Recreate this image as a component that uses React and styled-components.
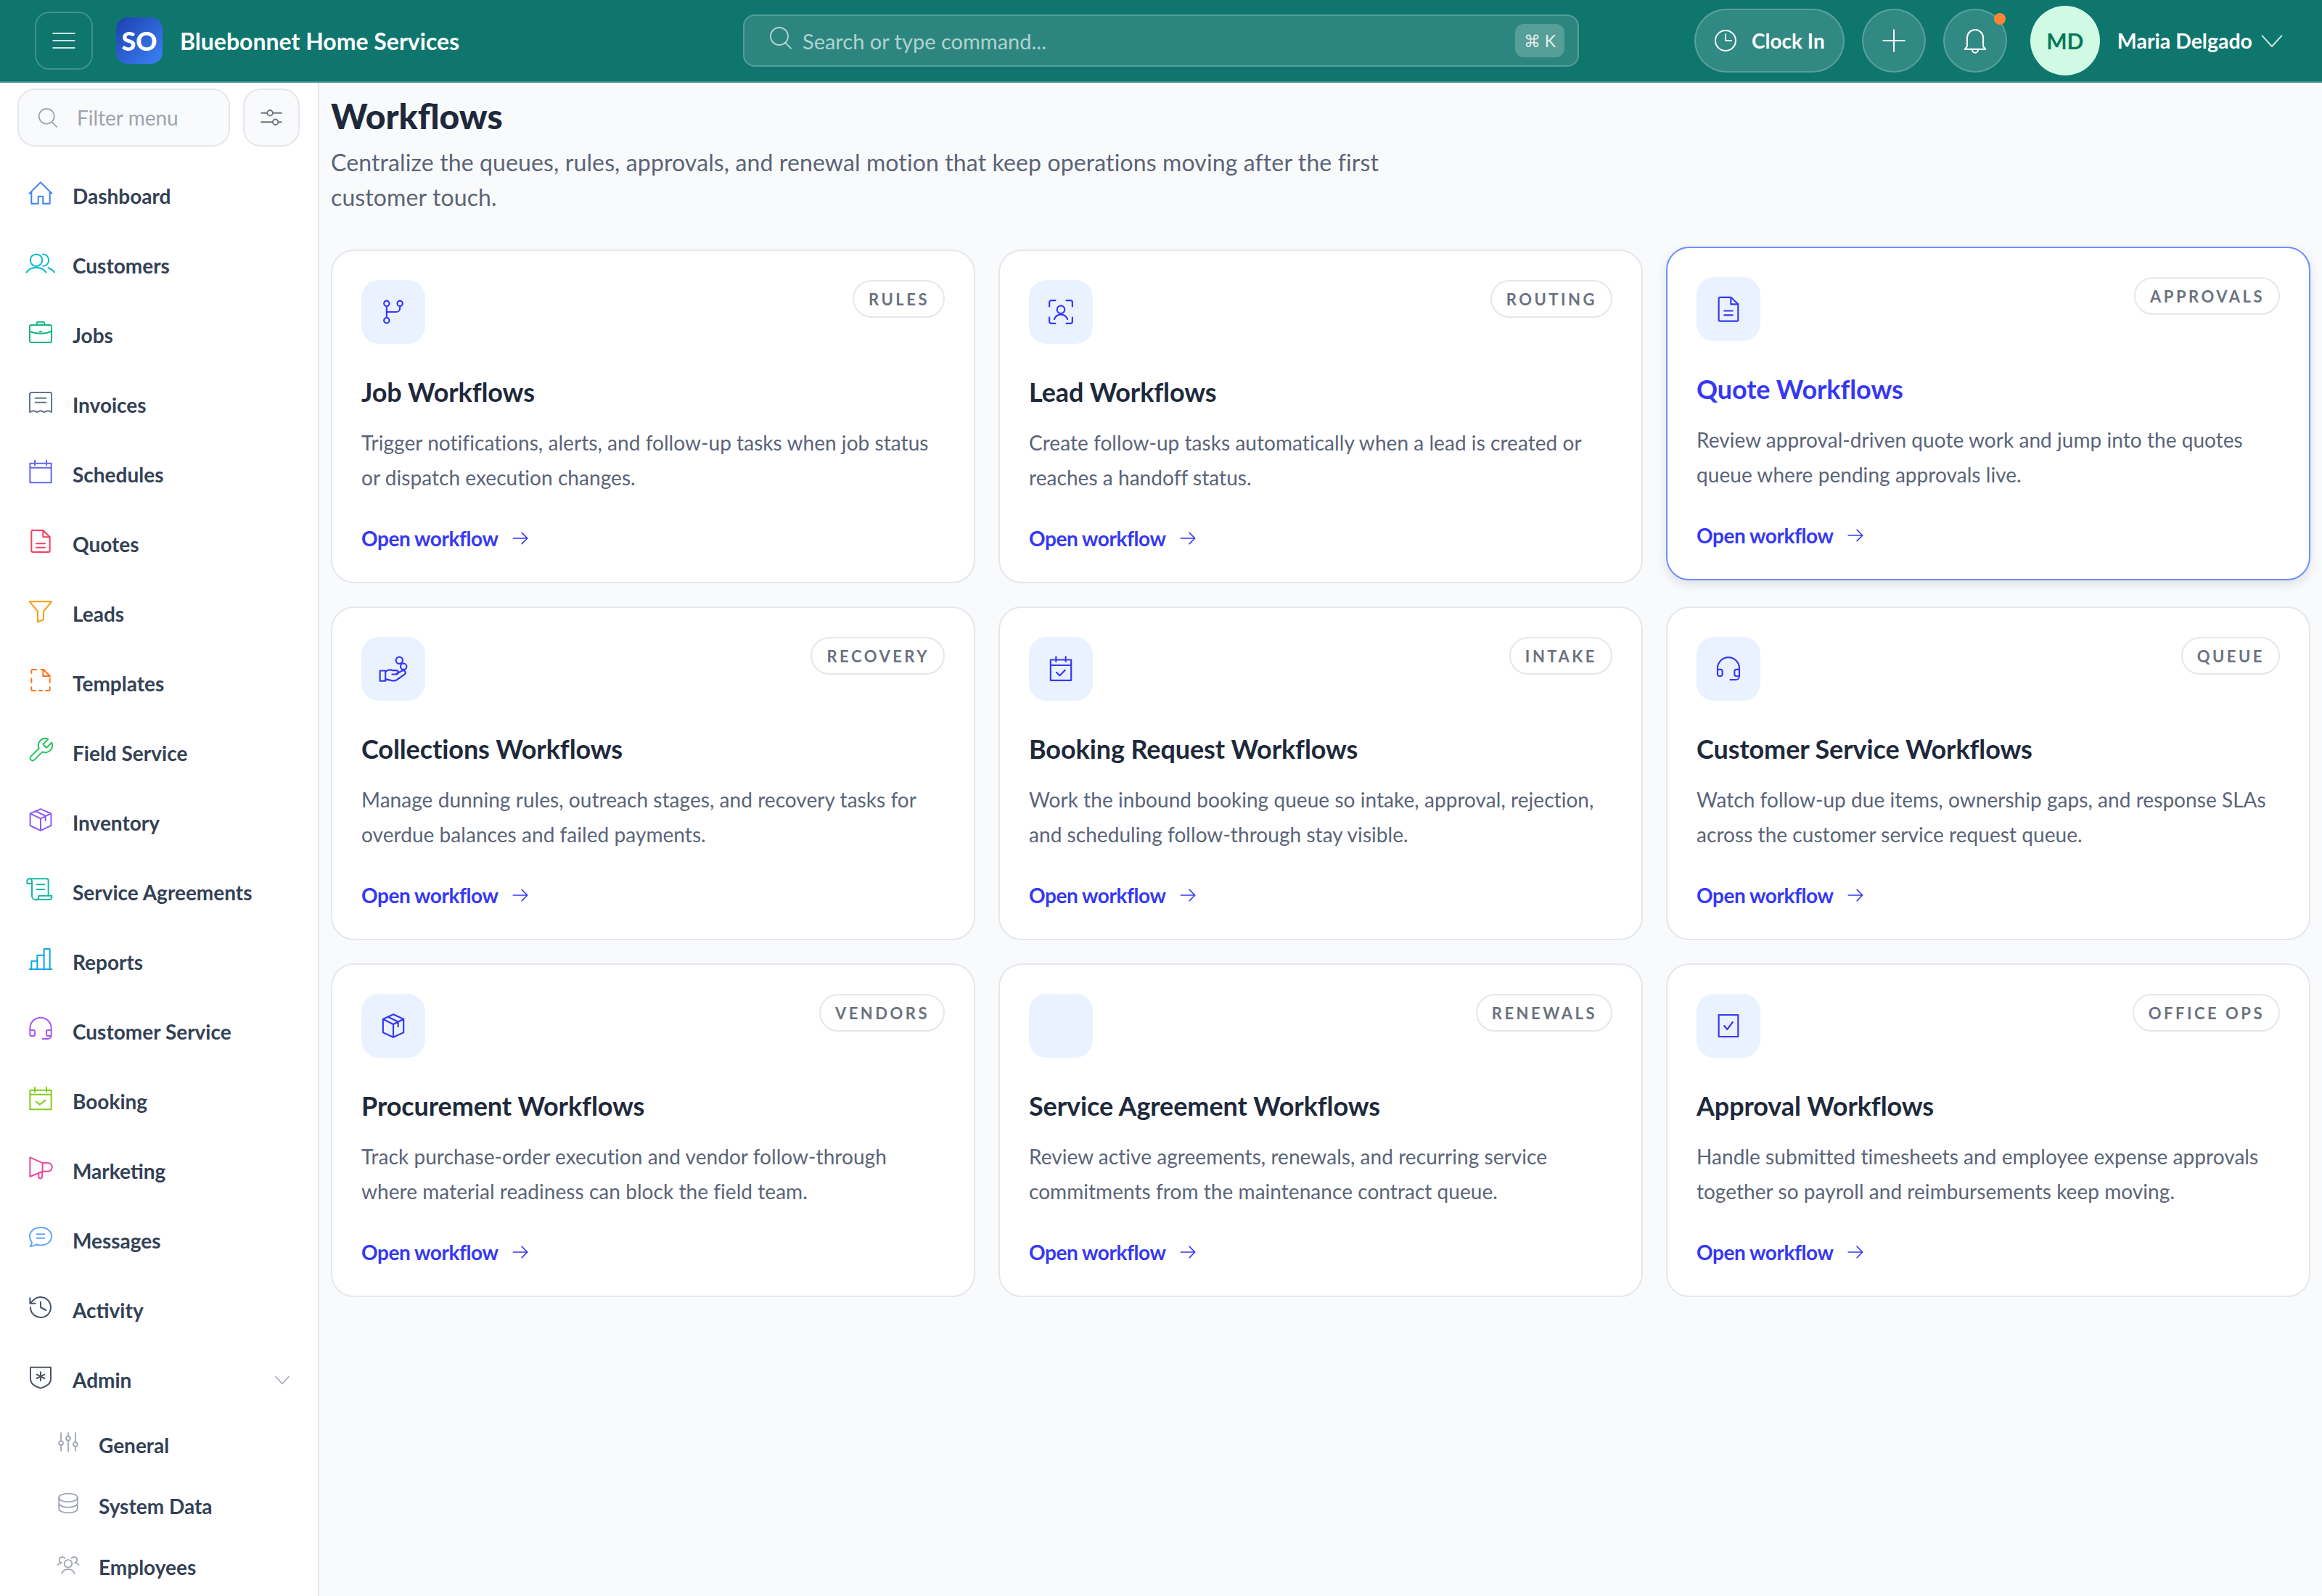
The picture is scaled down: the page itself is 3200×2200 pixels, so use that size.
import React from "react";
import styled, { createGlobalStyle } from "styled-components";

const GlobalStyle = createGlobalStyle`
  html, body { margin: 0; padding: 0; }
  body { font-family: "Lato", "Noto Sans", sans-serif; background: #f9fafb; }
  * { box-sizing: border-box; }
`;

const Shell = styled.div`
  width: 3200px;
  height: 2200px;
  display: flex;
  flex-direction: column;
  overflow: hidden;
`;

const Header = styled.header`
  height: 114px;
  flex: none;
  display: grid;
  grid-template-columns: 1fr 1152px 1fr;
  align-items: center;
  padding: 0 48px;
  background: #0f766e;
  border-bottom: 2px solid #3f918a;
`;

const HeaderLeft = styled.div`
  display: flex;
  align-items: center;
`;

const MenuButton = styled.div`
  width: 80px;
  height: 80px;
  display: flex;
  align-items: center;
  justify-content: center;
  border: 2px solid rgba(255, 255, 255, 0.2);
  border-radius: 20px;
  color: rgba(255, 255, 255, 0.8);
`;

const LogoMark = styled.div`
  width: 64px;
  height: 64px;
  margin-left: 32px;
  border-radius: 16px;
  background: linear-gradient(135deg, #1e40af, #3b82f6);
  color: #fff;
  font-size: 36px;
  font-weight: 900;
  display: flex;
  align-items: center;
  justify-content: center;
`;

const BrandName = styled.div`
  margin-left: 24px;
  color: #fff;
  font-size: 32px;
  font-weight: 700;
  white-space: nowrap;
`;

const SearchBar = styled.div`
  height: 72px;
  display: flex;
  align-items: center;
  padding: 0 18px 0 34px;
  border: 2px solid rgba(255, 255, 255, 0.2);
  border-radius: 16px;
  background: rgba(255, 255, 255, 0.12);
  color: rgba(255, 255, 255, 0.65);
`;

const SearchGlyph = styled.span`
  display: flex;
  margin-bottom: 8px;
`;

const SearchText = styled.span`
  margin-left: 14px;
  font-size: 29px;
  flex: 1;
`;

const Shortcut = styled.kbd`
  width: 68px;
  height: 46px;
  display: flex;
  align-items: center;
  justify-content: center;
  border-radius: 12px;
  background: rgba(255, 255, 255, 0.2);
  color: rgba(255, 255, 255, 0.85);
  font-family: "Lato", "DejaVu Sans", sans-serif;
  font-size: 23px;
`;

const HeaderRight = styled.div`
  display: flex;
  align-items: center;
  justify-content: flex-end;
  gap: 24px;
`;

const ClockButton = styled.div`
  height: 88px;
  width: 207px;
  display: flex;
  align-items: center;
  justify-content: center;
  gap: 20px;
  border: 2px solid rgba(255, 255, 255, 0.2);
  border-radius: 44px;
  background: rgba(255, 255, 255, 0.14);
  color: #fff;
  font-size: 28px;
  font-weight: 700;
`;

const RoundButton = styled.div`
  position: relative;
  width: 88px;
  height: 88px;
  display: flex;
  align-items: center;
  justify-content: center;
  border: 2px solid rgba(255, 255, 255, 0.2);
  border-radius: 50%;
  background: rgba(255, 255, 255, 0.14);
  color: #fff;
`;

const NotifyDot = styled.span`
  position: absolute;
  top: 4px;
  right: 0;
  width: 16px;
  height: 16px;
  border-radius: 50%;
  background: #fb8534;
`;

const Avatar = styled.div`
  width: 96px;
  height: 96px;
  margin-left: 8px;
  border-radius: 50%;
  background: #d1fae5;
  color: #047857;
  font-size: 30px;
  font-weight: 700;
  display: flex;
  align-items: center;
  justify-content: center;
`;

const UserName = styled.div`
  color: #fff;
  font-size: 28.5px;
  font-weight: 700;
  white-space: nowrap;
`;

const UserChevron = styled.div`
  margin: 0 5px 0 -13px;
  color: rgba(255, 255, 255, 0.8);
  display: flex;
`;

const Body = styled.div`
  flex: 1;
  min-height: 0;
  display: flex;
`;

const Sidebar = styled.aside`
  width: 440px;
  flex: none;
  padding-top: 8px;
  background: #fff;
  border-right: 2px solid #e5e7eb;
  overflow: hidden;
`;

const FilterRow = styled.div`
  display: flex;
  gap: 18px;
  padding: 0 24px;
  height: 80px;
`;

const FilterInput = styled.div`
  flex: none;
  width: 293px;
  display: flex;
  align-items: center;
  gap: 26px;
  padding-left: 26px;
  border: 2px solid #e5e7eb;
  border-radius: 24px;
  background: #f9fafb;
  color: #9ca3af;
  font-size: 28px;
`;

const FilterButton = styled.div`
  width: 78px;
  display: flex;
  align-items: center;
  justify-content: center;
  border: 2px solid #e5e7eb;
  border-radius: 24px;
  background: #f9fafb;
  color: #6b7280;
`;

const NavList = styled.nav`
  margin-top: 20px;
  display: flex;
  flex-direction: column;
`;

const NavRow = styled.div`
  height: ${(p) => (p.$sub ? 84 : 96)}px;
  flex: none;
  display: flex;
  align-items: center;
  gap: 28px;
  padding-left: ${(p) => (p.$sub ? 80 : 40)}px;
  padding-right: 40px;
  color: #334155;
  font-size: 28px;
  font-weight: 700;
`;

const NavIcon = styled.span`
  width: ${(p) => (p.$sub ? 28 : 32)}px;
  height: ${(p) => (p.$sub ? 28 : 32)}px;
  flex: none;
  margin-bottom: 8px;
  color: ${(p) => p.$color};
  display: flex;
`;

const NavLabel = styled.span`
  flex: 1;
  white-space: nowrap;
`;

const NavCaret = styled.span`
  color: #9ca3af;
  display: flex;
  margin-right: -2px;
`;

const Main = styled.main`
  flex: 1;
  min-width: 0;
  padding: 0 16px;
`;

const PageTitle = styled.h1`
  margin: 16px 0 0;
  color: #1e293b;
  font-size: 48px;
  line-height: 60px;
  font-weight: 900;
`;

const PageLead = styled.p`
  margin: 10px 0 0;
  max-width: 1500px;
  color: #5b6478;
  font-size: 32px;
  line-height: 48px;
  letter-spacing: 0.12px;
`;

const CardGrid = styled.div`
  margin-top: 48px;
  display: grid;
  grid-template-columns: repeat(3, 1fr);
  grid-auto-rows: 460px;
  gap: 32px;
`;

const Card = styled.article`
  display: flex;
  flex-direction: column;
  padding: 40px;
  background: #fff;
  border: 2px solid ${(p) => (p.$active ? "#6f8fff" : "#e5e7eb")};
  border-radius: 32px;
  box-shadow: ${(p) => (p.$active ? "0 6px 14px rgba(60, 70, 120, 0.14)" : "none")};
  transform: ${(p) => (p.$active ? "translateY(-4px)" : "none")};
`;

const CardTop = styled.div`
  display: flex;
  align-items: flex-start;
  justify-content: space-between;
`;

const IconTile = styled.div`
  width: 88px;
  height: 88px;
  display: flex;
  align-items: center;
  justify-content: center;
  border-radius: 24px;
  background: #ebf2ff;
  color: #3538f5;
`;

const Tag = styled.span`
  height: 52px;
  display: flex;
  align-items: center;
  padding: 0 19px 0 20px;
  border: 2px solid #e5e7eb;
  border-radius: 26px;
  color: #6b7280;
  font-size: 22px;
  font-weight: 700;
  letter-spacing: 3.5px;
`;

const CardTitle = styled.h2`
  margin: 42px 0 0;
  color: ${(p) => (p.$active ? "#3538f5" : "#1e293b")};
  font-size: 36px;
  line-height: 48px;
  font-weight: 700;
  letter-spacing: -0.1px;
`;

const CardText = styled.p`
  margin: 22px 0 0;
  color: #5b6478;
  font-size: 28px;
  line-height: 48px;
  letter-spacing: 0.05px;
`;

const CardLink = styled.a`
  margin-top: auto;
  height: 40px;
  display: flex;
  align-items: center;
  gap: 18px;
  color: #3538f5;
  font-size: 28px;
  font-weight: 700;
  letter-spacing: -0.45px;
`;

function Svg({ size = 32, sw = 1.5, children }) {
  return (
    <svg
      width={size}
      height={size}
      viewBox="0 0 24 24"
      fill="none"
      stroke="currentColor"
      strokeWidth={sw}
      strokeLinecap="round"
      strokeLinejoin="round"
      style={{ overflow: "visible", flex: "none" }}
    >
      {children}
    </svg>
  );
}

const P = ({ d }) => <path d={d} />;

const icons = {
  menu: <P d="M1 4.5h22M1 12h22M1 19.5h22" />,
  search: (
    <>
      <circle cx="10.5" cy="10.5" r="9" />
      <path d="M17 17.5l5.5 5.5" />
    </>
  ),
  sliders: (
    <>
      <path d="M1 7h6M14 7h9M1 17h12M20 17h3" />
      <circle cx="10.5" cy="7" r="3" />
      <circle cx="16.5" cy="17" r="3" />
    </>
  ),
  clock: (
    <>
      <circle cx="12" cy="12" r="10.5" />
      <path d="M12 5.5V12h6" />
    </>
  ),
  plus: <P d="M12 1v22M1 12h22" />,
  bell: <P d="M5 17V9.5a7 7 0 0 1 14 0V17l2 2.5H3L5 17zM9.5 20a2.5 2.5 0 0 0 5 0" />,
  chevron: <P d="M2 7l10 11L22 7" />,
  arrow: <P d="M3 12h18M14 5l7 7-7 7" />,
  home: <P d="M.5 12.5L12 1l11.500 11.500M2.500 10.500V23h7v-7.500h5V23h7V10.500" />,
  users: (
    <>
      <circle cx="7.5" cy="9.5" r="6.2" />
      <path d="M-2.5 22c2.5-3.500 5.500-5 10-5s7.500 1.500 10 5M14.500 3.400c3.200 0 5.800 2.700 5.800 6.100s-2.600 6.100-5.800 6.100M20 17.400c2.500.9 4.500 2.400 6.200 4.600" />
    </>
  ),
  briefcase: (
    <>
      <rect x="0.7" y="4.5" width="22.6" height="18" rx="1.7" />
      <path d="M8 4.5V3a1.6 1.6 0 0 1 1.6-1.6h4.8A1.6 1.6 0 0 1 16 3v1.500M.7 11c3.500 1.600 7.500 2.400 11.300 2.400s7.800-.8 11.300-2.400M11 11.200h2" />
    </>
  ),
  receipt: <P d="M.7 22.500V4a1.700 1.700 0 0 1 1.700-1.700h19.200A1.700 1.700 0 0 1 23.300 4v18.500l-3.800-1.400-3.700 1.400-3.800-1.400-3.800 1.400-3.700-1.400zM6.500 8h11M6.500 12.500h11" />,
  calendar: <P d="M1 3.500h22v20H1zM6 .5v5M18 .5v5M1 8h22" />,
  calendarCheck: <P d="M1 3.500h22v20H1zM6 .5v5M18 .5v5M1 8h22M7.500 15.500l3.500 3 6-4.500" />,
  doc: <P d="M2.500 2.200a1.500 1.500 0 0 1 1.500-1.500h10.500l7 7v14a1.500 1.500 0 0 1-1.500 1.500H4a1.500 1.500 0 0 1-1.500-1.500zM14.500.7v7h7M7.500 14.500h9M7.500 18.500h9" />,
  funnel: <P d="M.7 2.500h22.600L15 12.500v8.500l-6 2.500V12.500z" />,
  docDashed: <P d="M7.500.8H3.500a1 1 0 0 0-1 1v2.500M2.500 10v4M2.500 19v2.500a1 1 0 0 0 1 1h3M10.500 22.500h3M17.500 22.500h3a1 1 0 0 0 1-1V19M21.500 14v-4M12.500.8h2.500l6.500 6.500v.5M14.500 1v6.500h7" />,
  wrench: (
    <g transform="translate(-2.4 -2.4) scale(1.2)" strokeWidth="1.25">
      <path d="M14.700 6.300a1 1 0 0 0 0 1.400l1.600 1.600a1 1 0 0 0 1.400 0l3.770-3.770a6 6 0 0 1-7.940 7.940l-6.910 6.910a2.120 2.120 0 0 1-3-3l6.910-6.910a6 6 0 0 1 7.940-7.940l-3.760 3.760z" />
    </g>
  ),
  box: <P d="M12 .8l10.800 4.800v12.400L12 23.200 1.200 18V5.600zM1.200 5.600L12 10.800l10.800-5.200M12 10.800v12.400M6.500 3l10.500 5v5" />,
  scroll: <P d="M-2 3.500a2.500 2.500 0 0 1 5 0V19a3.500 3.500 0 0 0 3.500 3.500H21a2.500 2.500 0 0 0 2.500-2.500v-1.500H10V20a2.500 2.500 0 0 1-3.500 2.500M-2 3.500V6h5M.5 1H18a2 2 0 0 1 2 2v15.500M8 7h8M8 12h8" />,
  bars: <P d="M.5 22.500h23M2.500 22.500V14h6v8.500M8.500 22.500V8h7v14.500M15.500 8V1.500h6v21" />,
  headset: <P d="M1 18V11.500a11 11 0 0 1 22 0V19a3.500 3.500 0 0 1-3.500 3.500H14M1 13.500h3.500a1.500 1.500 0 0 1 1.500 1.500v3a1.500 1.500 0 0 1-1.500 1.500h-2A1.500 1.500 0 0 1 1 18M23 13.500h-3.500A1.500 1.500 0 0 0 18 15v3a1.500 1.500 0 0 0 1.500 1.500H23" />,
  megaphone: <P d="M1 1v20l13-5.500h5.500a4.300 4.300 0 0 0 0-8.700H14zM14 6.800v8.700M10 17v4a1.800 1.800 0 0 0 3.600 0v-5.500" />,
  chat: <P d="M12 1.500c6.400 0 11.300 3.900 11.300 9.200s-4.900 9.200-11.300 9.200c-1.700 0-3.300-.3-4.700-.8-1.600 1.300-3.700 2-6 2 1-1.200 1.600-2.600 1.600-4.200C1.700 15.100.7 13 .7 10.700.7 5.400 5.600 1.500 12 1.500zM8 8.500h8M8 12.500h8" />,
  history: <P d="M1.500 12a10.500 10.500 0 1 0 3.200-7.500L1 8M1 2.500V8h5.500M12 6.500V12l5.500 3" />,
  shield: <P d="M1.500 2h21v12.500c0 4.500-5 7.500-10.500 9.200-5.500-1.700-10.500-4.700-10.500-9.200zM12 7v9M8 9.500l8 4M16 9.500l-8 4" />,
  tuners: (
    <>
      <circle cx="3.500" cy="13" r="2.500" />
      <circle cx="12" cy="7.500" r="2.500" />
      <circle cx="20.500" cy="14.500" r="2.500" />
      <path d="M3.500 1v9.500M3.500 15.500V22M12 1v4M12 10v13M20.500 1v11M20.500 17v5" />
    </>
  ),
  database: (
    <>
      <ellipse cx="12" cy="5.500" rx="11" ry="5" />
      <path d="M1 5.500v13c0 2.800 4.900 5 11 5s11-2.200 11-5v-13M1 12c0 2.800 4.900 5 11 5s11-2.200 11-5" />
    </>
  ),
  team: (
    <>
      <circle cx="12" cy="11.500" r="4.500" />
      <path d="M4.500 23c1.300-3.200 4-5 7.500-5s6.200 1.800 7.500 5M5 3.500a3.500 3.500 0 0 1 3 1.700M-.5 13c1-1.400 2.800-2.300 5-2.500M19 3.500a3.500 3.500 0 0 0-3 1.700M24.500 13c-1-1.400-2.800-2.300-5-2.500" />
      <path d="M5 3.500a3.500 3.500 0 0 0-1.600 6.600M19 3.500a3.500 3.500 0 0 1 1.600 6.600" />
    </>
  ),
  branch: (
    <>
      <circle cx="6.500" cy="5" r="2.200" />
      <circle cx="17.500" cy="5" r="2.200" />
      <circle cx="6.500" cy="19" r="2.200" />
      <path d="M6.500 7.200v9.600M17.500 7.200V9a3 3 0 0 1-3 3h-8" />
    </>
  ),
  scanUser: (
    <>
      <path d="M2.500 7.500V4A1.500 1.500 0 0 1 4 2.500h3.500M16.500 2.500H20A1.500 1.500 0 0 1 21.500 4v3.500M21.500 16.500V20a1.500 1.500 0 0 1-1.500 1.500h-3.500M7.500 21.500H4A1.500 1.500 0 0 1 2.500 20v-3.500" />
      <circle cx="12" cy="10" r="3.200" />
      <path d="M6.500 18c1-2.600 3-3.800 5.500-3.800s4.500 1.200 5.500 3.800" />
    </>
  ),
  docSmall: <P d="M4 3.300a1 1 0 0 1 1-1h9l6 5.700v13a1 1 0 0 1-1 1H5a1 1 0 0 1-1-1zM14 2.300V8h6M8.500 13.500h7M8.500 17h7" />,
  handCoin: (
    <>
      <circle cx="17" cy="5" r="2.800" />
      <circle cx="20.500" cy="10" r="2.500" />
      <path d="M1 13.500h4.500v8.500H1zM5.500 14.500c2-1.800 4-2 6-1.200h3a1.600 1.600 0 0 1 0 3.200H11M14.500 16l5-2.500a1.800 1.800 0 0 1 2 2.900L15 21a5 5 0 0 1-3.500.8L5.500 20.500" />
    </>
  ),
  calSmall: <P d="M3.500 4.500h17v17h-17zM8 2v4M16 2v4M3.500 9h17M8.500 15l2.500 2.500 4.500-4.500" />,
  headSmall: <P d="M3 15v-3.500a9 9 0 0 1 18 0V18a3 3 0 0 1-3 3h-4.500M3 12.500h2.500a1.500 1.500 0 0 1 1.500 1.500v2.500A1.500 1.500 0 0 1 5.500 18h-1A1.500 1.500 0 0 1 3 16.500zM21 12.500h-2.500A1.500 1.500 0 0 0 17 14v2.500a1.500 1.500 0 0 0 1.500 1.500H21" />,
  boxSmall: <P d="M12 2.500l8.500 4v11L12 21.500l-8.500-4v-11zM3.500 6.500L12 10.800l8.500-4.300M12 10.800v10.700M7.500 4.500l8.500 4.200v4" />,
  checkSquare: <P d="M4 3h16v18H4zM8.500 12l2.500 3 4.500-6" />,
};

const Icon = ({ name, size, sw }) => (
  <Svg size={size} sw={sw}>
    {icons[name]}
  </Svg>
);

const navItems = [
  ["Dashboard", "home", "#3b82f6"],
  ["Customers", "users", "#06b6d4"],
  ["Jobs", "briefcase", "#10b981"],
  ["Invoices", "receipt", "#64748b"],
  ["Schedules", "calendar", "#6366f1"],
  ["Quotes", "doc", "#f43f5e"],
  ["Leads", "funnel", "#f59e0b"],
  ["Templates", "docDashed", "#f97316"],
  ["Field Service", "wrench", "#22c55e"],
  ["Inventory", "box", "#8b5cf6"],
  ["Service Agreements", "scroll", "#14b8a6"],
  ["Reports", "bars", "#0ea5e9"],
  ["Customer Service", "headset", "#a855f7"],
  ["Booking", "calendarCheck", "#84cc16"],
  ["Marketing", "megaphone", "#ec4899"],
  ["Messages", "chat", "#60a5fa"],
  ["Activity", "history", "#475569"],
];

const adminItems = [
  ["General", "tuners"],
  ["System Data", "database"],
  ["Employees", "team"],
];

const workflows = [
  {
    title: "Job Workflows",
    tag: "RULES",
    icon: "branch",
    text: "Trigger notifications, alerts, and follow-up tasks when job status or dispatch execution changes.",
  },
  {
    title: "Lead Workflows",
    tag: "ROUTING",
    icon: "scanUser",
    text: "Create follow-up tasks automatically when a lead is created or reaches a handoff status.",
  },
  {
    title: "Quote Workflows",
    tag: "APPROVALS",
    icon: "docSmall",
    active: true,
    text: "Review approval-driven quote work and jump into the quotes queue where pending approvals live.",
  },
  {
    title: "Collections Workflows",
    tag: "RECOVERY",
    icon: "handCoin",
    text: "Manage dunning rules, outreach stages, and recovery tasks for overdue balances and failed payments.",
  },
  {
    title: "Booking Request Workflows",
    tag: "INTAKE",
    icon: "calSmall",
    text: "Work the inbound booking queue so intake, approval, rejection, and scheduling follow-through stay visible.",
  },
  {
    title: "Customer Service Workflows",
    tag: "QUEUE",
    icon: "headSmall",
    text: "Watch follow-up due items, ownership gaps, and response SLAs across the customer service request queue.",
  },
  {
    title: "Procurement Workflows",
    tag: "VENDORS",
    icon: "boxSmall",
    text: "Track purchase-order execution and vendor follow-through where material readiness can block the field team.",
  },
  {
    title: "Service Agreement Workflows",
    tag: "RENEWALS",
    text: "Review active agreements, renewals, and recurring service commitments from the maintenance contract queue.",
  },
  {
    title: "Approval Workflows",
    tag: "OFFICE OPS",
    icon: "checkSquare",
    text: "Handle submitted timesheets and employee expense approvals together so payroll and reimbursements keep moving.",
  },
];

function TopBar() {
  return (
    <Header>
      <HeaderLeft>
        <MenuButton>
          <Icon name="menu" />
        </MenuButton>
        <LogoMark>SO</LogoMark>
        <BrandName>Bluebonnet Home Services</BrandName>
      </HeaderLeft>
      <SearchBar>
        <SearchGlyph>
          <Icon name="search" sw={1.4} />
        </SearchGlyph>
        <SearchText>Search or type command...</SearchText>
        <Shortcut>⌘ K</Shortcut>
      </SearchBar>
      <HeaderRight>
        <ClockButton>
          <Icon name="clock" />
          Clock In
        </ClockButton>
        <RoundButton>
          <Icon name="plus" />
        </RoundButton>
        <RoundButton>
          <Icon name="bell" size={38} sw={1.3} />
          <NotifyDot />
        </RoundButton>
        <Avatar>MD</Avatar>
        <UserName>Maria Delgado</UserName>
        <UserChevron>
          <Icon name="chevron" />
        </UserChevron>
      </HeaderRight>
    </Header>
  );
}

function SideNav() {
  return (
    <Sidebar>
      <FilterRow>
        <FilterInput>
          <Icon name="search" size={28} />
          Filter menu
        </FilterInput>
        <FilterButton>
          <Icon name="sliders" size={30} />
        </FilterButton>
      </FilterRow>
      <NavList>
        {navItems.map(([label, icon, color]) => (
          <NavRow key={label}>
            <NavIcon $color={color}>
              <Icon name={icon} />
            </NavIcon>
            <NavLabel>{label}</NavLabel>
          </NavRow>
        ))}
        <NavRow>
          <NavIcon $color="#4b5563">
            <Icon name="shield" />
          </NavIcon>
          <NavLabel>Admin</NavLabel>
          <NavCaret>
            <Icon name="chevron" size={22} />
          </NavCaret>
        </NavRow>
        {adminItems.map(([label, icon]) => (
          <NavRow $sub key={label}>
            <NavIcon $sub $color="#9ca3af">
              <Icon name={icon} size={28} />
            </NavIcon>
            <NavLabel>{label}</NavLabel>
          </NavRow>
        ))}
      </NavList>
    </Sidebar>
  );
}

function WorkflowCard({ item }) {
  return (
    <Card $active={item.active}>
      <CardTop>
        <IconTile>{item.icon && <Icon name={item.icon} size={40} sw={1.3} />}</IconTile>
        <Tag>{item.tag}</Tag>
      </CardTop>
      <CardTitle $active={item.active}>{item.title}</CardTitle>
      <CardText>{item.text}</CardText>
      <CardLink>
        Open workflow
        <Icon name="arrow" size={26} />
      </CardLink>
    </Card>
  );
}

export default function App() {
  return (
    <Shell>
      <GlobalStyle />
      <TopBar />
      <Body>
        <SideNav />
        <Main>
          <PageTitle>Workflows</PageTitle>
          <PageLead>
            Centralize the queues, rules, approvals, and renewal motion that keep operations moving after the first
            customer touch.
          </PageLead>
          <CardGrid>
            {workflows.map((item) => (
              <WorkflowCard key={item.title} item={item} />
            ))}
          </CardGrid>
        </Main>
      </Body>
    </Shell>
  );
}
